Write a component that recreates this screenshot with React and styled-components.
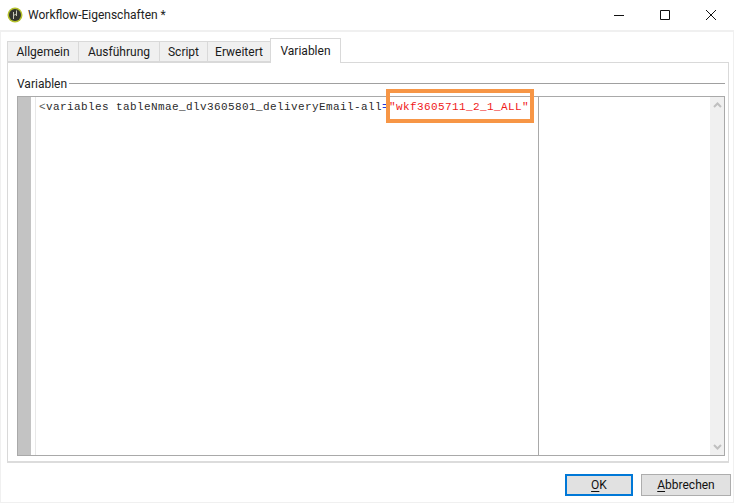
import React from 'react'
import styled, { createGlobalStyle } from 'styled-components'

const Global = createGlobalStyle`
  html, body {
    margin: 0;
    padding: 0;
    background: #fff;
  }
  * {
    box-sizing: border-box;
  }
`

const Win = styled.div`
  width: 734px;
  height: 503px;
  display: flex;
  flex-direction: column;
  background: #fff;
  font-family: Roboto, 'Noto Sans', sans-serif;
  font-size: 12px;
  color: #000;
  overflow: hidden;
`

const TitleBar = styled.div`
  height: 30px;
  flex: none;
  display: flex;
  align-items: center;
  padding-left: 7px;
`

const Title = styled.div`
  margin-left: 5px;
  font-size: 12px;
  color: #222;
  flex: 1;
`

const WinButton = styled.div`
  width: 46px;
  height: 30px;
  display: flex;
  align-items: center;
  justify-content: center;
`

const Body = styled.div`
  flex: 1;
  display: flex;
  flex-direction: column;
  border-top: 2px solid #f0f0f0;
  border-left: 1px solid #f0f0f0;
  border-right: 1px solid #f0f0f0;
  border-bottom: 1px solid #f0f0f0;
  padding: 6px 2px 6px 6px;
`

const Tabs = styled.div`
  display: flex;
  height: 24px;
  flex: none;
  align-items: flex-end;
  position: relative;
  z-index: 1;
`

const Tab = styled.div`
  width: ${p => p.$w}px;
  height: ${p => (p.$active ? '25px' : '21px')};
  margin-bottom: ${p => (p.$active ? '-1px' : '0')};
  padding-bottom: ${p => (p.$active ? '1px' : '0')};
  display: flex;
  align-items: center;
  justify-content: center;
  background: ${p => (p.$active ? '#fff' : '#f0f0f0')};
  border: 1px solid #d9d9d9;
  border-bottom: ${p => (p.$active ? 'none' : '1px solid #d9d9d9')};
  margin-left: ${p => (p.$first ? '0' : '-1px')};
  color: #1a1a1a;
`

const Panel = styled.div`
  flex: 1;
  display: flex;
  flex-direction: column;
  margin-right: 2px;
  border: 1px solid #d9d9d9;
  border-bottom: 2px solid #dcdcdc;
  padding: 12px 3px 5px 9px;
`

const GroupLabel = styled.div`
  display: flex;
  align-items: center;
  height: 17px;
  gap: 2px;
  color: #222;
  margin-bottom: 4px;
  &::after {
    content: '';
    flex: 1;
    height: 1px;
    background: #a0a0a0;
  }
`

const Editor = styled.div`
  flex: 1;
  display: flex;
  border: 1px solid #a9a9a9;
`

const Gutter = styled.div`
  width: 13px;
  background: #c3c3c3;
  flex: none;
`

const Margin = styled.div`
  width: 5px;
  flex: none;
  background: #fff;
  border-right: 1px solid #e8e8e8;
`

const CodePane = styled.div`
  width: 503px;
  flex: none;
  border-right: 1px solid #a9a9a9;
  padding: 3px 0 0 3px;
  font-family: 'Liberation Mono', monospace;
  font-size: 11px;
  letter-spacing: 0.4px;
  line-height: 14px;
  white-space: pre;
  color: #2a2a2a;
`

const Bracket = styled.span`
  color: #5a5a5a;
`

const Eq = styled.span`
  color: #2040e0;
`

const Str = styled.span`
  color: #f01818;
  position: relative;
  &::after {
    content: '';
    position: absolute;
    left: -3px;
    right: -5px;
    top: -12px;
    bottom: -10px;
    border: 4px solid #f79646;
  }
`

const SidePane = styled.div`
  flex: 1;
`

const Scroll = styled.div`
  width: 14px;
  flex: none;
  background: #f0f0f0;
  display: flex;
  flex-direction: column;
  justify-content: space-between;
  align-items: center;
  padding: 5px 0;
`

const Footer = styled.div`
  display: flex;
  justify-content: flex-end;
  gap: 8px;
  padding: 11px 0 0 0;
  height: 33px;
  flex: none;
`

const Button = styled.div`
  height: 22px;
  width: ${p => p.$w}px;
  display: flex;
  align-items: center;
  justify-content: center;
  background: #e1e1e1;
  border: ${p => (p.$def ? '2px solid #0078d7' : '1px solid #adadad')};
  color: #111;
  u {
    text-underline-offset: 2px;
  }
`

const Logo = () => (
  <svg width="16" height="16" viewBox="0 0 16 16">
    <circle cx="8" cy="8" r="7.5" fill="#b5c22c" />
    <circle cx="8" cy="8" r="6" fill="#34352f" />
    <path d="M6.5 5v7M9.5 3.5v5.5M6.5 8c2 0 3 -.5 3 -2" stroke="#c8c8b8" strokeWidth="1" fill="none" />
  </svg>
)

const Chevron = ({ up }) => (
  <svg width="9" height="6" viewBox="0 0 9 6">
    <path d={up ? 'M1 5l3.5-3.5L8 5' : 'M1 1l3.5 3.5L8 1'} stroke="#c0c0c0" strokeWidth="2" fill="none" />
  </svg>
)

const App = () => (
  <Win>
    <Global />
    <TitleBar>
      <Logo />
      <Title>Workflow-Eigenschaften *</Title>
      <WinButton>
        <svg width="10" height="10" viewBox="0 0 10 10"><path d="M0 5.5h10" stroke="#111" /></svg>
      </WinButton>
      <WinButton>
        <svg width="10" height="10" viewBox="0 0 10 10"><path d="M.5.5h9v9h-9z" stroke="#111" fill="none" /></svg>
      </WinButton>
      <WinButton>
        <svg width="10" height="10" viewBox="0 0 10 10"><path d="M0 0l10 10M10 0L0 10" stroke="#111" fill="none" /></svg>
      </WinButton>
    </TitleBar>
    <Body>
      <Tabs>
        <Tab $first $w={72}>Allgemein</Tab>
        <Tab $w={82}>Ausführung</Tab>
        <Tab $w={49}>Script</Tab>
        <Tab $w={64}>Erweitert</Tab>
        <Tab $active $w={71}>Variablen</Tab>
      </Tabs>
      <Panel>
        <GroupLabel>Variablen</GroupLabel>
        <Editor>
          <Gutter />
          <Margin />
          <CodePane>
            <Bracket>&lt;</Bracket>variables tableNmae_dlv3605801_deliveryEmail-all<Eq>=</Eq><Str>"wkf3605711_2_1_ALL"</Str>
          </CodePane>
          <SidePane />
          <Scroll>
            <Chevron up />
            <Chevron />
          </Scroll>
        </Editor>
      </Panel>
      <Footer>
        <Button $w={68} $def><span><u>O</u>K</span></Button>
        <Button $w={90}><span><u>A</u>bbrechen</span></Button>
      </Footer>
    </Body>
  </Win>
)

export default App
